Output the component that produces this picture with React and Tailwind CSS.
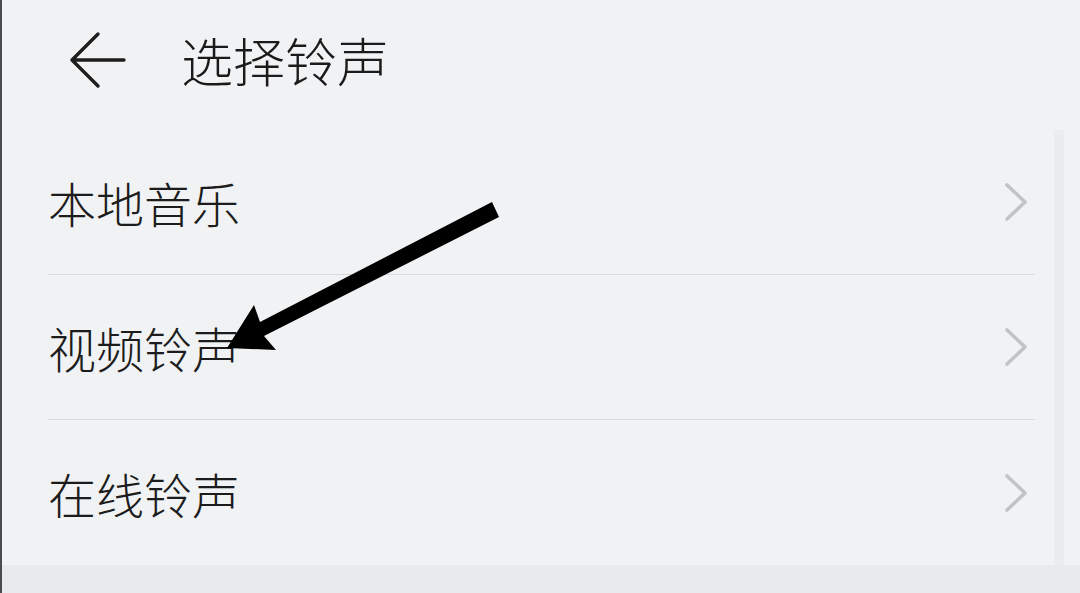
import React from "react";

const font = { fontFamily: '"Noto Sans CJK SC", "Noto Sans", sans-serif' };

function Chevron() {
  return (
    <svg width="26" height="40" viewBox="0 0 26 40" fill="none">
      <path d="M4 3 L22 20 L4 37" stroke="#c2c3c5" strokeWidth="3.6" strokeLinecap="round" strokeLinejoin="round" />
    </svg>
  );
}

function Row({ label, last }) {
  return (
    <div className={`flex h-[145px] items-center justify-between pr-[6px] ${last ? "" : "border-b border-[#d9dadc]"}`}>
      <span className="text-[48px] font-light leading-none text-[#1c1c1c]" style={font}>{label}</span>
      <Chevron />
    </div>
  );
}

export default function App() {
  return (
    <div className="relative h-[593px] w-[1080px] overflow-hidden border-l-2 border-[#4b4b4b] bg-[#f1f2f4]" style={font}>
      <div className="flex h-[130px] items-center pb-[10px] pl-[66px]">
        <svg width="60" height="60" viewBox="0 0 60 60" fill="none">
          <path d="M30 4 L4 30 L30 56 M4 30 L56 30" stroke="#1e1e1e" strokeWidth="3.4" strokeLinecap="round" strokeLinejoin="round" />
        </svg>
        <span className="ml-[53px] text-[52px] font-light leading-none text-[#1a1a1a]">选择铃声</span>
      </div>
      <div className="flex h-[435px]">
        <div className="flex-1 pl-[46px] pr-[19px]">
          <Row label="本地音乐" />
          <Row label="视频铃声" />
          <Row label="在线铃声" last />
        </div>
        <div className="w-[10px] bg-[#ebecee]" />
        <div className="w-[16px]" />
      </div>
      <div className="h-[28px] bg-[#e9eaec]" />
      <svg className="pointer-events-none absolute left-0 top-0" width="1080" height="593" viewBox="0 0 1080 593">
        <path d="M490 202 L497 217 L262 336 L274 350 L225 348 L252 305 L258 322 Z" fill="#000" />
      </svg>
    </div>
  );
}
